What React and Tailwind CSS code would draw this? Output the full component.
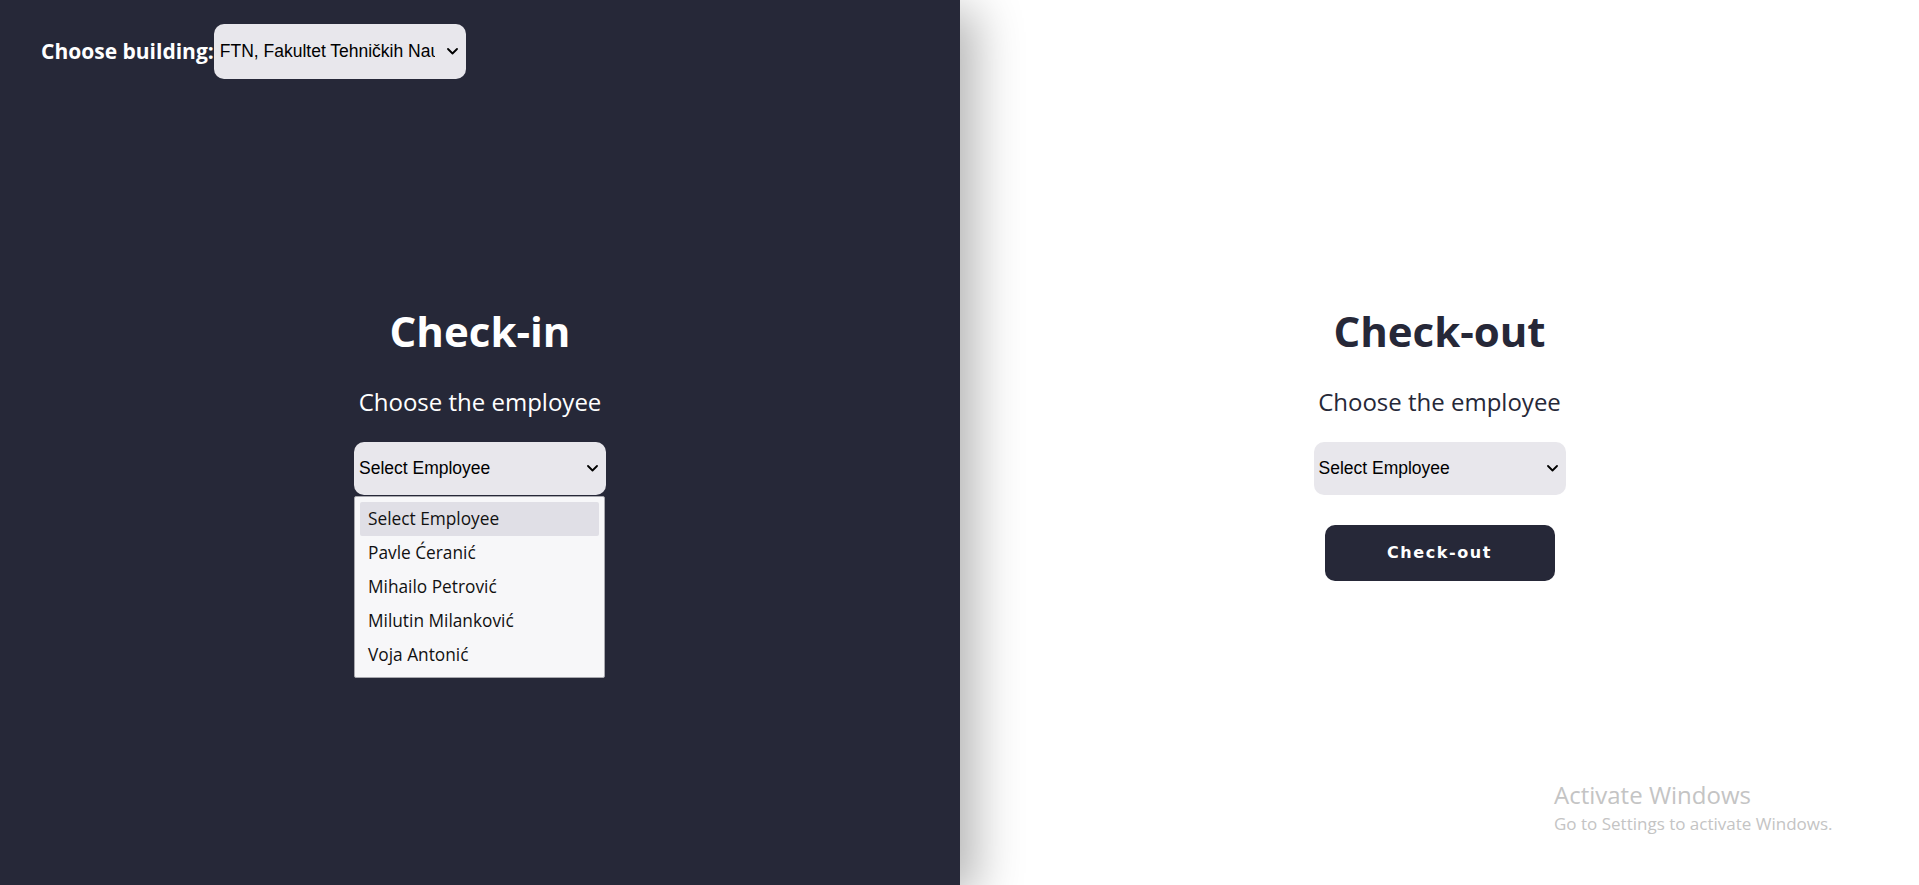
import React, { useState } from "react";

const employees = [
    "Select Employee",
    "Pavle Ćeranić",
    "Mihailo Petrović",
    "Milutin Milanković",
    "Voja Antonić",
];

const Chevron = () => (
    <svg width="11" height="7" viewBox="0 0 11 7" fill="none" className="shrink-0">
        <path d="M1 1l4.5 4.5L10 1" stroke="#000" strokeWidth="1.8" strokeLinecap="round" strokeLinejoin="round" />
    </svg>
);

const EmployeeSelect = ({ open, value }) => (
    <div className="relative">
        <button className="flex h-[53px] w-[252px] items-center justify-between rounded-[10px] bg-[#e8e7ec] pl-[5px] pr-[8px] text-left text-[17.5px] text-black [font-family:'Liberation_Sans',sans-serif]">
            <span>{value}</span>
            <Chevron />
        </button>
        {open && (
            <ul className="absolute left-0 top-[54px] z-20 w-[251px] rounded-[2px] border border-[#a8a8ae] bg-[#f7f7f9] px-[5px] pb-[5px] pt-[5px] text-[17.3px] text-[#111] [font-family:'Open_Sans',sans-serif]">
                {employees.map((e, i) => (
                    <li
                        key={i}
                        className={`flex h-[34px] items-center rounded-[2px] px-[8px] ${i === 0 ? "bg-[#e0dfe6]" : ""}`}
                    >
                        {e}
                    </li>
                ))}
            </ul>
        )}
    </div>
);

const Panel = ({ title, dark, open }) => (
    <div className="flex flex-col items-center pt-[2px] [font-family:'Open_Sans',sans-serif]">
        <h1 className={`text-[42px] font-bold leading-[50px] ${dark ? "text-white" : "text-[#262838]"}`}>
            {title}
        </h1>
        <p className={`mt-[30px] text-[24px] leading-[32px] ${dark ? "text-white" : "text-[#262838]"}`}>
            Choose the employee
        </p>
        <div className="mt-[24px]">
            <EmployeeSelect open={open} value="Select Employee" />
        </div>
        <button className="mt-[30px] h-[56px] w-[230px] rounded-[10px] bg-[#262838] text-[16px] font-bold tracking-[1.6px] text-white [font-family:'DejaVu_Sans',sans-serif]">
            {title}
        </button>
    </div>
);

export default function App() {
    const [building] = useState("FTN, Fakultet Tehničkih Nauka");

    return (
        <div className="flex h-screen w-full overflow-hidden bg-white">
            {/* Check-in side */}
            <div className="relative z-10 flex w-[960px] shrink-0 flex-col bg-[#262838] shadow-[15px_10px_45px_rgba(0,0,0,0.3)]">
                <div className="flex h-[103px] shrink-0 items-center pl-[41px]">
                    <span className="text-[21px] font-bold text-white [font-family:'Open_Sans',sans-serif]">
                        Choose building:
                    </span>
                    <button className="flex h-[55px] w-[252px] items-center justify-between rounded-[10px] bg-[#e8e7ec] pl-[6px] pr-[8px] text-[17.5px] text-black [font-family:'Liberation_Sans',sans-serif]">
                        <span className="w-[215px] overflow-hidden whitespace-nowrap text-left">{building}</span>
                        <Chevron />
                    </button>
                </div>
                <div className="flex flex-1 items-center justify-center">
                    <Panel title="Check-in" dark open />
                </div>
                <div className="h-[103px] shrink-0" />
            </div>

            {/* Check-out side */}
            <div className="relative flex flex-1 items-center justify-center">
                <Panel title="Check-out" />
                <div className="absolute left-[594px] top-[780px] text-[#c4c4c4] [font-family:'Open_Sans',sans-serif]">
                    <div className="text-[24px] leading-[30px]">Activate Windows</div>
                    <div className="text-[17px] leading-[28px]">Go to Settings to activate Windows.</div>
                </div>
            </div>
        </div>
    );
}
